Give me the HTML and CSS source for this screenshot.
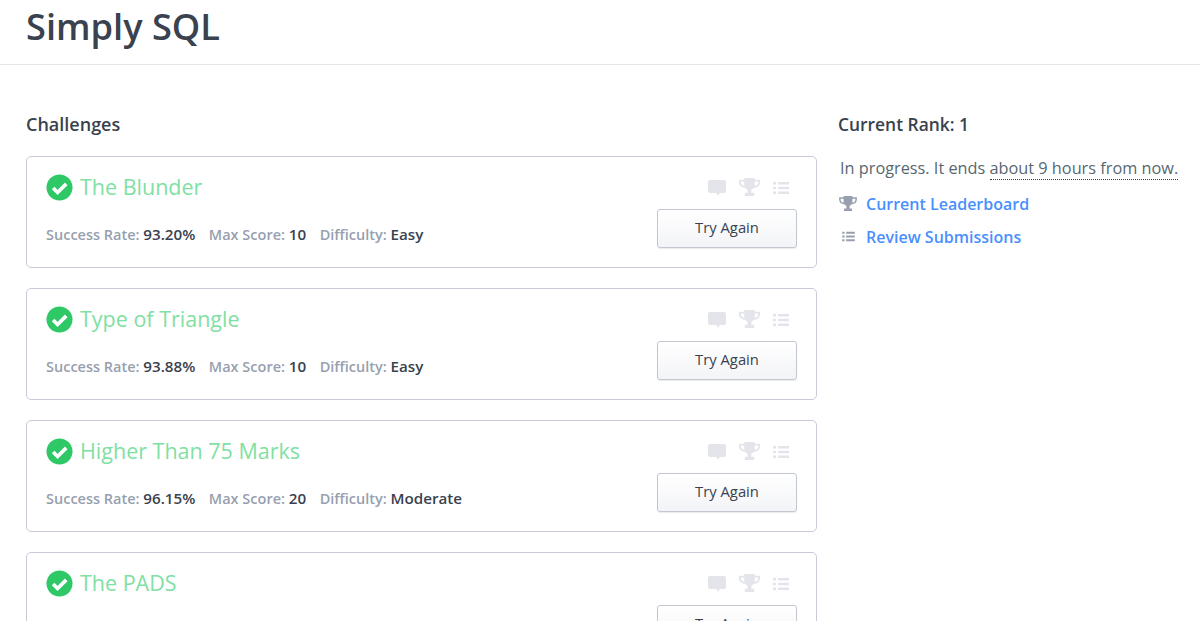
FILE: index.html
```html
<!DOCTYPE html>
<html lang="en">
<head>
<meta charset="utf-8">
<title>Simply SQL</title>
<link rel="stylesheet" href="styles.css">
</head>
<body>
<svg class="defs" width="0" height="0" aria-hidden="true">
  <defs>
    <symbol id="i-check" viewBox="0 0 28 28">
      <circle cx="14" cy="14" r="13.5" fill="#2ec866"/>
      <path d="M7.4 14.6l4.6 4.6 9-9" fill="none" stroke="#fff" stroke-width="3.8"/>
    </symbol>
    <symbol id="i-chat" viewBox="0 0 18 18">
      <path d="M2 1h14a2 2 0 0 1 2 2v9a2 2 0 0 1-2 2h-4l-2.500 3-1-3H2a2 2 0 0 1-2-2V3a2 2 0 0 1 2-2z"/>
    </symbol>
    <symbol id="i-trophy" viewBox="0 0 20 18">
      <path d="M5 0h10v1.500h5v2.700c0 3-2.600 4.800-5.800 5.100-.7.900-1.500 1.400-2.400 1.700v3h2.700V17H5.500v-3h2.700v-3c-.9-.3-1.700-.8-2.400-1.700C2.600 9 0 7.200 0 4.200V1.500h5zM1.700 3.200v1c0 1.700 1.500 3 3.500 3.300-.2-1.200-.2-2.800-.2-4.300zm16.600 0H15c0 1.500 0 3.100-.2 4.300 2-.3 3.500-1.600 3.500-3.300z" fill-rule="evenodd"/>
    </symbol>
    <symbol id="i-list" viewBox="0 0 16 14">
      <path d="M0 1h3v2.400H0zM5 1h11v2.400H5zM0 5.800h3v2.400H0zM5 5.800h11v2.400H5zM0 10.600h3V13H0zM5 10.600h11V13H5z"/>
    </symbol>
  </defs>
</svg>

<header class="page-header">
  <h1 class="page-title">Simply SQL</h1>
</header>

<main class="layout">
  <section class="challenges">
    <h2 class="section-title">Challenges</h2>

    <article class="card">
      <div class="card-top">
        <h3 class="challenge-name"><svg class="check"><use href="#i-check"/></svg>The Blunder</h3>
        <div class="card-icons">
          <svg class="ic-chat"><use href="#i-chat"/></svg>
          <svg class="ic-trophy"><use href="#i-trophy"/></svg>
          <svg class="ic-list"><use href="#i-list"/></svg>
        </div>
      </div>
      <div class="card-bottom">
        <p class="meta">
          <span class="meta-item">Success Rate: <b>93.20%</b></span>
          <span class="meta-item">Max Score: <b>10</b></span>
          <span class="meta-item">Difficulty: <b>Easy</b></span>
        </p>
        <button class="try-btn" type="button">Try Again</button>
      </div>
    </article>

    <article class="card">
      <div class="card-top">
        <h3 class="challenge-name"><svg class="check"><use href="#i-check"/></svg>Type of Triangle</h3>
        <div class="card-icons">
          <svg class="ic-chat"><use href="#i-chat"/></svg>
          <svg class="ic-trophy"><use href="#i-trophy"/></svg>
          <svg class="ic-list"><use href="#i-list"/></svg>
        </div>
      </div>
      <div class="card-bottom">
        <p class="meta">
          <span class="meta-item">Success Rate: <b>93.88%</b></span>
          <span class="meta-item">Max Score: <b>10</b></span>
          <span class="meta-item">Difficulty: <b>Easy</b></span>
        </p>
        <button class="try-btn" type="button">Try Again</button>
      </div>
    </article>

    <article class="card">
      <div class="card-top">
        <h3 class="challenge-name"><svg class="check"><use href="#i-check"/></svg>Higher Than 75 Marks</h3>
        <div class="card-icons">
          <svg class="ic-chat"><use href="#i-chat"/></svg>
          <svg class="ic-trophy"><use href="#i-trophy"/></svg>
          <svg class="ic-list"><use href="#i-list"/></svg>
        </div>
      </div>
      <div class="card-bottom">
        <p class="meta">
          <span class="meta-item">Success Rate: <b>96.15%</b></span>
          <span class="meta-item">Max Score: <b>20</b></span>
          <span class="meta-item">Difficulty: <b>Moderate</b></span>
        </p>
        <button class="try-btn" type="button">Try Again</button>
      </div>
    </article>

    <article class="card">
      <div class="card-top">
        <h3 class="challenge-name"><svg class="check"><use href="#i-check"/></svg>The PADS</h3>
        <div class="card-icons">
          <svg class="ic-chat"><use href="#i-chat"/></svg>
          <svg class="ic-trophy"><use href="#i-trophy"/></svg>
          <svg class="ic-list"><use href="#i-list"/></svg>
        </div>
      </div>
      <div class="card-bottom">
        <p class="meta"></p>
        <button class="try-btn" type="button">Try Again</button>
      </div>
    </article>
  </section>

  <aside class="sidebar">
    <h2 class="section-title rank-title">Current Rank: 1</h2>
    <p class="progress">In progress. It ends <span class="dotted">about 9 hours from now.</span></p>
    <a class="side-link" href="#"><span class="side-icon"><svg class="side-trophy"><use href="#i-trophy"/></svg></span>Current Leaderboard</a>
    <a class="side-link" href="#"><span class="side-icon"><svg class="side-list"><use href="#i-list"/></svg></span>Review Submissions</a>
  </aside>
</main>
</body>
</html>
```

FILE: styles.css
```css
* { box-sizing: border-box; }
html, body { height: 100%; overflow: hidden; }
body {
  margin: 0;
  background: #fff;
  color: #39424e;
  font-family: "Open Sans", "Noto Sans", sans-serif;
}
.defs { display: block; height: 0; }
.page-header {
  height: 65px;
  padding: 4px 26px 0;
  border-bottom: 1px solid #e3e5eb;
}
.page-title {
  margin: 0;
  font-size: 36.2px;
  line-height: 44px;
  font-weight: 600;
  color: #39424e;
}
.layout {
  display: flex;
  align-items: flex-start;
  gap: 21px;
  padding: 47px 0 0 26px;
}
.challenges { flex: 0 0 791px; }
.section-title {
  margin: 0 0 20px;
  font-size: 18px;
  line-height: 24px;
  font-weight: 600;
  color: #39424e;
}
.rank-title { font-size: 17.4px; }
.card {
  height: 112px;
  margin-bottom: 20px;
  padding: 16px 19px 0;
  border: 1px solid #c9cbd8;
  border-radius: 5px;
  background: #fff;
}
.card-top {
  display: flex;
  justify-content: space-between;
  align-items: center;
  height: 28px;
}
.challenge-name {
  display: flex;
  align-items: center;
  margin: 0;
  font-size: 21.5px;
  line-height: 28px;
  font-weight: 400;
  color: #7fe0a3;
}
.check { width: 27px; height: 27px; margin-right: 7px; flex: none; }
.card-icons {
  display: flex;
  align-items: center;
  gap: 13px;
  fill: #e3e5eb;
  padding: 1px 8px 0 0;
}
.ic-chat { width: 18px; height: 18px; }
.ic-trophy { width: 21px; height: 19px; }
.ic-list { width: 16px; height: 14px; }
.card-bottom {
  display: flex;
  justify-content: space-between;
  align-items: flex-start;
  margin-top: 8px;
}
.meta {
  display: flex;
  gap: 13.5px;
  margin: 16px 0 0;
  font-size: 14.5px;
  line-height: 18px;
  font-weight: 600;
  color: #979faf;
}
.meta b { font-size: 15.2px; font-weight: 600; color: #39424e; }
.try-btn {
  width: 140px;
  height: 39px;
  padding: 0 0 3px;
  border: 1px solid #c2c7d0;
  border-radius: 3px;
  background: linear-gradient(#fff, #f3f4f7);
  box-shadow: 0 1px 1px rgba(0, 0, 0, .08);
  color: #39424e;
  font-family: inherit;
  font-size: 14.8px;
  font-weight: 400;
}
.sidebar { flex: 1; min-width: 0; }
.sidebar .section-title { margin-bottom: 21px; }
.progress {
  margin: 0 0 8px 2px;
  font-size: 16.3px;
  line-height: 22px;
  color: #576871;
  white-space: nowrap;
}
.dotted { border-bottom: 1px dotted #39424e; }
.side-link {
  display: flex;
  align-items: center;
  height: 33px;
  font-size: 16px;
  font-weight: 600;
  color: #4a8fff;
  text-decoration: none;
}
.side-icon {
  display: flex;
  justify-content: center;
  width: 20px;
  margin-right: 8px;
  fill: #979faf;
}
.side-trophy { width: 18px; height: 16px; }
.side-list { width: 13px; height: 11px; }
```
